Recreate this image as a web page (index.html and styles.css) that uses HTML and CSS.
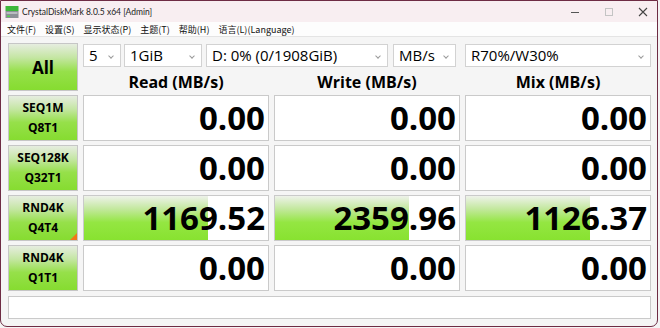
FILE: index.html
```html
<!DOCTYPE html>
<html lang="zh-CN">
<head>
    <meta charset="UTF-8">
    <title>CrystalDiskMark 8.0.5 x64 [Admin]</title>
    <link rel="stylesheet" href="styles.css">
</head>
<body>
    <div class="window">
        <div class="titlebar">
            <svg class="app-icon" width="14" height="14" viewBox="0 0 14 14">
                <rect x="0.5" y="1" width="13" height="5" fill="#3cb83a"/>
                <rect x="0.5" y="6" width="13" height="7" fill="#8c9096"/>
                <rect x="1.5" y="7" width="11" height="2" fill="#b8bcc0"/>
                <rect x="2" y="10.5" width="3" height="1.5" fill="#5ad050"/>
            </svg>
            <span class="title">CrystalDiskMark 8.0.5 x64 [Admin]</span>
            <div class="controls">
                <svg width="10" height="10" viewBox="0 0 10 10"><line x1="1" y1="5.5" x2="9" y2="5.5" stroke="#555" stroke-width="1"/></svg>
                <svg width="10" height="10" viewBox="0 0 10 10"><rect x="1.5" y="1.5" width="7" height="7" fill="none" stroke="#c4c4c4" stroke-width="1"/></svg>
                <svg width="10" height="10" viewBox="0 0 10 10"><path d="M1 1 L9 9 M9 1 L1 9" stroke="#444" stroke-width="1.1"/></svg>
            </div>
        </div>
        <div class="menubar">
            <span>文件(F)</span>
            <span>设置(S)</span>
            <span>显示状态(P)</span>
            <span>主题(T)</span>
            <span>帮助(H)</span>
            <span>语言(L)(Language)</span>
        </div>
        <div class="main">
            <div class="grid">
                <div class="btn all">All</div>
                <div class="selects">
                    <div class="select s-count">5<i></i></div>
                    <div class="select s-size">1GiB<i></i></div>
                    <div class="select s-drive">D: 0% (0/1908GiB)<i></i></div>
                    <div class="select s-unit">MB/s<i></i></div>
                    <div class="select s-mix">R70%/W30%<i></i></div>
                </div>
                <div class="head">Read (MB/s)</div>
                <div class="head">Write (MB/s)</div>
                <div class="head">Mix (MB/s)</div>

                <div class="btn label"><span>SEQ1M</span><span>Q8T1</span></div>
                <div class="cell">0.00</div>
                <div class="cell">0.00</div>
                <div class="cell">0.00</div>

                <div class="btn label"><span>SEQ128K</span><span>Q32T1</span></div>
                <div class="cell">0.00</div>
                <div class="cell">0.00</div>
                <div class="cell">0.00</div>

                <div class="btn label current"><span>RND4K</span><span>Q4T4</span></div>
                <div class="cell bar" style="--fill: 67.5%">1169.52</div>
                <div class="cell bar" style="--fill: 73%">2359.96</div>
                <div class="cell bar" style="--fill: 67.5%">1126.37</div>

                <div class="btn label"><span>RND4K</span><span>Q1T1</span></div>
                <div class="cell">0.00</div>
                <div class="cell">0.00</div>
                <div class="cell">0.00</div>
            </div>
            <div class="status"></div>
        </div>
    </div>
</body>
</html>
```

FILE: styles.css
```css
body {
    margin: 0;
    background: #f4f4f4;
    font-family: "Open Sans", "Noto Sans CJK SC", sans-serif;
    color: #000;
}
.window {
    box-sizing: border-box;
    width: 658px;
    height: 327px;
    border: 1px solid #6e2c44;
    border-radius: 0 0 7px 7px;
    background: #f5f5f5;
    overflow: hidden;
}
.titlebar {
    height: 21px;
    background: #f8eef1;
    display: flex;
    align-items: center;
    padding-left: 4px;
}
.app-icon {
    margin-right: 3px;
}
.title {
    font-family: Lato, sans-serif;
    font-size: 8.5px;
    color: #222;
}
.controls {
    margin-left: auto;
    display: flex;
    gap: 24px;
    padding-right: 9px;
}
.menubar {
    height: 14px;
    background: #fdfdfd;
    border-bottom: 1px solid #e4e4e4;
    display: flex;
    align-items: center;
    gap: 9px;
    padding-left: 6px;
    font-family: "Noto Sans CJK SC", sans-serif;
    font-size: 9px;
    color: #111;
}
.main {
    padding: 6px 0 0 7px;
}
.grid {
    display: grid;
    grid-template-columns: 70px 186px 186px 186px;
    grid-template-rows: 24px 20px 46px 46px 46px 46px;
    column-gap: 5px;
    row-gap: 4px;
}
.btn {
    box-sizing: border-box;
    border: 1px solid #c6c6c6;
    background: linear-gradient(to bottom, #e6ede0 0%, #c4e6a2 30%, #96e04a 60%, #86dc30 100%);
    display: flex;
    flex-direction: column;
    align-items: center;
    justify-content: center;
    font-weight: bold;
    position: relative;
}
.all {
    grid-row: 1 / 3;
    font-size: 17px;
}
.label {
    font-size: 12px;
    line-height: 20px;
}
.current::after {
    content: "";
    position: absolute;
    right: 0;
    bottom: 0;
    border-style: solid;
    border-width: 0 0 7px 7px;
    border-color: transparent transparent #f07818 transparent;
}
.selects {
    grid-column: 2 / 5;
    display: flex;
    padding-top: 1px;
}
.select {
    box-sizing: border-box;
    height: 23px;
    background: #fff;
    border: 1px solid #d2d2d2;
    font-size: 15px;
    line-height: 21px;
    padding-left: 5px;
    position: relative;
}
.select i {
    position: absolute;
    right: 7px;
    top: 9px;
    width: 3px;
    height: 3px;
    border-right: 1px solid #9a9a9a;
    border-bottom: 1px solid #9a9a9a;
    transform: rotate(45deg);
}
.s-count { width: 38px; margin-right: 3px; }
.s-size { width: 78px; margin-right: 4px; }
.s-drive { width: 182px; margin-right: 5px; }
.s-unit { width: 63px; }
.s-mix { width: 186px; margin-left: auto; }
.head {
    font-size: 16px;
    font-weight: bold;
    text-align: center;
    line-height: 20px;
    padding-top: 1px;
}
.cell {
    box-sizing: border-box;
    border: 1px solid #cacaca;
    background-color: #fff;
    font-size: 33px;
    font-weight: bold;
    text-align: right;
    padding: 2px 3px 0 0;
    line-height: 40px;
}
.bar {
    background-image: linear-gradient(to bottom, #eef2ea 0%, #c2e89c 30%, #94e642 60%, #88e230 100%);
    background-repeat: no-repeat;
    background-size: var(--fill) 100%;
}
.status {
    box-sizing: border-box;
    width: 643px;
    height: 23px;
    margin-top: 5px;
    background: #fff;
    border: 1px solid #cacaca;
}
```
